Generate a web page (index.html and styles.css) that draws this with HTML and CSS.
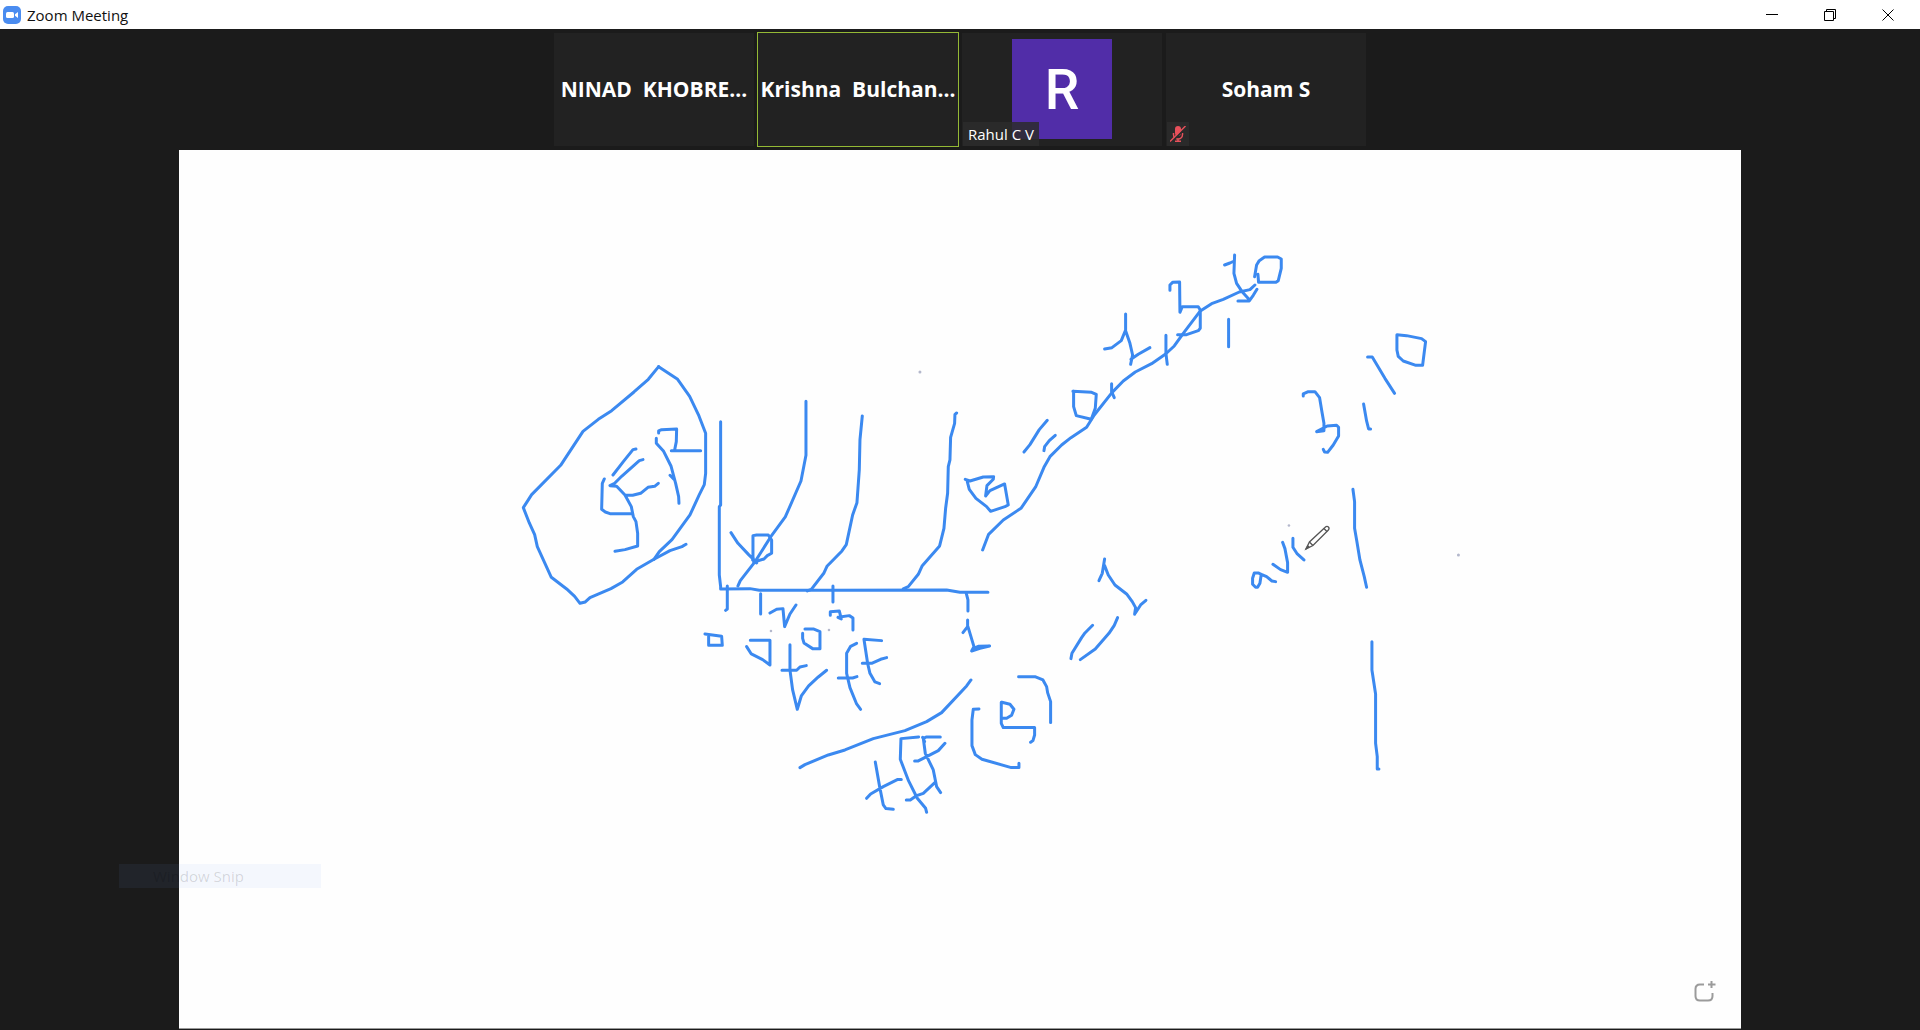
FILE: index.html
```html
<!DOCTYPE html>
<html lang="en">
<head>
<meta charset="utf-8">
<meta name="viewport" content="width=device-width, initial-scale=1">
<title>Zoom Meeting</title>
<link rel="stylesheet" href="styles.css">
</head>
<body>
<header class="titlebar">
  <svg class="app-icon" viewBox="0 0 18 18" aria-hidden="true">
    <rect width="18" height="18" rx="5" fill="#4a8cf0"/>
    <rect x="3" y="6" width="8" height="6" rx="1.5" fill="#fff"/>
    <path d="M12 8.2 15 6v6l-3-2.200z" fill="#fff"/>
  </svg>
  <h1 class="app-title">Zoom Meeting</h1>
  <div class="window-controls">
    <button class="window-button" type="button" aria-label="Minimize">
      <svg viewBox="0 0 12 12"><path d="M0 5.500h12"/></svg>
    </button>
    <button class="window-button" type="button" aria-label="Restore">
      <svg viewBox="0 0 12 12"><path d="M.5 2.500h9v9h-9zM2.500 2.500v-2h9v9h-2"/></svg>
    </button>
    <button class="window-button" type="button" aria-label="Close">
      <svg viewBox="0 0 12 12"><path d="M.5.5l11 11M11.500.5l-11 11"/></svg>
    </button>
  </div>
</header>

<main class="meeting">
  <ul class="participants">
    <li class="tile"><span class="tile-name">NINAD  KHOBRE...</span></li>
    <li class="tile tile-speaking"><span class="tile-name">Krishna  Bulchan...</span></li>
    <li class="tile">
      <span class="avatar" aria-hidden="true">R</span>
      <span class="tile-label">Rahul C V</span>
    </li>
    <li class="tile">
      <span class="tile-name">Soham S</span>
      <span class="tile-muted">
        <svg viewBox="0 0 16 16" role="img" aria-label="Muted">
          <rect x="5" y="0" width="6" height="10" rx="3" fill="#e8505b"/>
          <path d="M3.500 7v1.500a4.500 4.500 0 0 0 9 0V7M8 13v2M5 15.200h6" fill="none" stroke="#e8505b" stroke-width="1.500"/>
          <path d="M1.500 16 16.500 1" stroke="#2b2b2b" stroke-width="2"/>
          <path d="M0 15.500 15.500 0" stroke="#e8505b" stroke-width="1.400"/>
        </svg>
      </span>
    </li>
  </ul>

  <section class="board" aria-label="Shared whiteboard">
    <svg class="drawing" viewBox="179 150 1562 878" role="img" aria-label="Handwritten notes">
      <!-- loop round the first note -->
      <g class="ink" transform="translate(510 350) scale(.33333)">
        <path d="M446 50 415 88 372 126 305 182 265 208 219 244 152 346 65 434 40 473 58 519 74 554 82 590 124 682 170 717 194 739 210 760 226 756 240 743 303 716 338 696 380 658 432 628 480 602 516 590 528 583"/>
        <path d="M446 50 503 88 539 139 567 198 587 250V370L583 404 567 436 540 495 486 569 448 605 432 628"/>
        <path d="M446 249V243L455 239 500 237 499 275 494 300M484 302H572M439 265V280L461 304 483 348 497 400 506 440 507 460M480 376 494 390"/>
        <path d="M378 297 369 299 340 335 309 375M399 329 388 332 335 379 314 400 300 407 320 409 345 435 364 470 370 500 378 515 383 550V588L345 599 315 604M283 387 277 400 275 478 286 486 300 491H368M347 436H368L392 430 414 412 434 409 445 400"/>
      </g>
      <!-- axes, curves and tick labels -->
      <g class="ink" transform="translate(690 390) scale(.33333)">
        <path d="M92 95V345L88 350V555L92 590V597L180 596 208 601H430L770 600 810 607H894"/>
        <path d="M348 34V196L333 273 286 381 242 441 196 514 151 572 144 588"/>
        <path d="M517 78 510 150 508 240 501 338 488 375 469 464 456 483 411 529 402 549 364 598 352 603"/>
        <path d="M800 69 795 73 794 100 782 142 780 210 775 230 773 310 767 355 762 415 749 468 697 527 685 553 655 590 640 597"/>
        <path d="M123 428 144 460 176 494 196 514M192 518 189 500V437L200 435H235L245 450V490L232 497 222 507 192 516M188 510 200 519"/>
        <path d="M112 588V657L107 661M212 611V672M429 588V636M829 610 834 630V663"/>
        <path d="M45 732 95 739 97 766H56V737M181 751H240V825L218 809 184 792 170 770M240 669 260 658 279 656 284 710 300 672 318 645"/>
        <path d="M345 717H370L390 725V776H368L342 759 338 745V730M421 676V665L448 663 454 687 444 682 478 677 489 684V720"/>
        <path d="M300 764V840L308 900 322 958 334 918 356 888 385 861 410 841M276 841H320L330 831 349 827M500 760 482 769 470 790V850L480 893 500 942 512 958M445 864H488L501 860M575 752 522 748 533 820 540 850 555 876 569 881M517 820H545L572 808 590 803"/>
        <path d="M833 690V710L819 728M834 710 852 770 845 783 870 775 899 768 865 769 850 776"/>
        <path d="M826 268 840 273 880 261 911 260 910 268 891 287 887 318 900 302 944 282 955 345 945 350 902 364 890 350 858 325 838 298 832 275"/>
      </g>
      <!-- lower notes -->
      <g class="ink" transform="translate(780 640) scale(.33333)">
        <path d="M573 120 560 138 485 218 440 245 375 272 280 296 195 330 145 345 75 374 60 383"/>
        <path d="M286 366 299 440 310 495 318 506 340 508M260 475 272 462 310 440 352 419H364M416 291 363 296 361 358 386 423 412 475 437 505 440 517M379 480H391L408 468 430 460 467 426M481 291H440L430 295 436 340 460 390 470 440 482 458M428 292 434 305M404 363H415L440 350 475 332 495 310"/>
        <path d="M597 207 580 208 576 240V317L586 344 606 358 694 383H717V370"/>
        <path d="M664 187V250L670 263H764V285L759 302 752 307M666 187 690 193 702 208 695 226 680 235H666"/>
        <path d="M716 110H765L789 120 800 140 803 158 812 185V248"/>
      </g>
      <!-- list along the slope -->
      <g class="ink" transform="translate(950 240) scale(.33333)">
        <path d="M98 930 116 883 160 840 213 805 257 741 282 682 300 650 335 615 363 593 410 562 433 525 486 458 520 423 556 396 605 371 647 342 673 318 700 280 750 214 785 191 820 178 868 156 900 149 915 135"/>
        <path d="M222 636 240 614 268 569 292 541M282 632 284 620 298 602 316 586M369 454 425 457 439 463 436 505 424 538 379 527 371 500V454M485 431V455L493 473"/>
        <path d="M464 327 486 323 514 302 527 270V222M527 272 540 310 548 345 542 373M543 358 565 343 600 323M648 286V340L652 373"/>
        <path d="M660 151V135L668 127 689 126 690 217 697 200H745L751 210V265L745 272 710 284H683M836 238V320"/>
        <path d="M824 75 840 69 853 63M854 45 852 100 860 130 878 157 897 178M864 183H898L910 166 921 148"/>
        <path d="M914 110 920 75 928 62 944 51H983L994 57V85L985 122 978 127H926L924 103"/>
      </g>
      <!-- middle notes and separators -->
      <g class="ink" transform="translate(1040 470) scale(.33333)">
        <path d="M177 332 187 310 194 267M194 287 205 315 225 345 260 372 277 395 287 413 284 433M286 430 302 405 318 391M93 566 96 550 125 503 135 489 158 466M121 569 166 537 207 490 223 466 233 443"/>
        <path d="M664 313 655 309H643L638 325V343L647 352H653L660 340 664 313 680 320 696 333 707 335M699 283 722 299 743 307V278L735 236 728 217M759 205V232L772 252 792 270"/>
        <path d="M939 58 944 95V175L951 215 960 270 973 320 980 352M996 515V600L1007 672V820L1012 860V897H1017"/>
      </g>
      <!-- right-hand numbers -->
      <g class="ink" transform="translate(1220 310) scale(.33333)">
        <path d="M250 258V252L265 245H285L299 263 306 305 312 340V362L290 365 322 348 350 346 356 352V378L340 405 323 427 314 426 310 418M431 282 440 333 446 357H452M443 141H457L495 205 524 250M531 74 560 77 605 86 617 95 608 166H588L550 153 535 139 531 120Z"/>
      </g>
      <g class="speck">
        <circle cx="771" cy="631" r="1.300"/>
        <circle cx="829" cy="630" r="1.300"/>
        <circle cx="1289" cy="525.500" r="1.300"/>
        <circle cx="1458.500" cy="555" r="1.500"/>
        <circle cx="920" cy="372" r="1.500"/>
      </g>
      <g class="pencil" transform="translate(1306 526)">
        <path d="M0 23 3.500 16 19 1.500Q21-.5 22.500 1T22 4.500L7 19.500Z"/>
        <path d="M3.500 16 7 19.500M18 2.500l3 3M0 23l2-3 1 1z"/>
      </g>
    </svg>
    <button class="add-frame" type="button" aria-label="Add page">
      <svg viewBox="0 0 22 22"><path d="M10 4.500H6Q1.500 4.500 1.500 9v7q0 4.500 4.500 4.500h8q4.500 0 4.500-4.500v-3M17.500 1v7M14 4.500h7.500"/></svg>
    </button>
  </section>
  <div class="snip-hint">Window Snip</div>
</main>
</body>
</html>
```
FILE: styles.css
```css
* {
  box-sizing: border-box;
}

body {
  display: flex;
  flex-direction: column;
  min-height: 100vh;
  margin: 0;
  background: #1b1b1b;
  font-family: "Open Sans", "Noto Sans", sans-serif;
}

button {
  padding: 0;
  border: 0;
  background: none;
}

.titlebar {
  display: flex;
  align-items: center;
  height: 29px;
  padding: 0 3px;
  background: #fff;
}

.app-icon {
  width: 18px;
  height: 18px;
}

.app-title {
  flex: 1;
  margin: 0 0 0 6px;
  color: #111;
  font-size: 15px;
  font-weight: 400;
  line-height: 20px;
}

.window-controls {
  display: flex;
}

.window-button {
  display: grid;
  place-items: center;
  width: 58px;
  height: 28px;
}

.window-button svg {
  width: 12px;
  height: 12px;
  fill: none;
  stroke: #000;
}

.meeting {
  position: relative;
  display: flex;
  flex: 1;
  flex-direction: column;
  align-items: center;
}

.participants {
  display: flex;
  gap: 4px;
  margin: 0;
  padding: 4px;
  list-style: none;
}

.tile {
  position: relative;
  display: grid;
  place-items: center;
  width: 200px;
  height: 113px;
  background: #222;
}

.tile-speaking {
  outline: 1px solid #94b935;
}

.tile-name {
  padding-bottom: 2px;
  color: #fff;
  font-size: 21px;
  font-weight: 700;
  line-height: 28px;
  white-space: pre;
}

.avatar {
  display: grid;
  place-items: center;
  width: 100px;
  height: 100px;
  margin-bottom: 1px;
  padding-top: 2px;
  background: #512da8;
  color: #fff;
  font: 500 55px/64px Roboto, sans-serif;
}

.tile-label,
.tile-muted {
  position: absolute;
  bottom: 0;
  left: 1px;
  height: 24px;
  background: rgba(44, 44, 44, .85);
}

.tile-label {
  padding: 0 5px;
  color: #fff;
  font-size: 15px;
  line-height: 24px;
  white-space: nowrap;
}

.tile-muted {
  display: grid;
  place-items: center;
  width: 22px;
}

.tile-muted svg {
  width: 16px;
  height: 16px;
}

.board {
  position: relative;
  width: 81.35%;
  aspect-ratio: 1562 / 878;
  border-bottom: 1px solid #999;
  background: #fefefe;
}

.drawing {
  display: block;
  width: 100%;
  height: 100%;
}

.ink {
  fill: none;
  stroke: #3b89f0;
  stroke-width: 9;
  stroke-linecap: round;
  stroke-linejoin: round;
}

.speck {
  fill: #b4b8cc;
}

.pencil {
  fill: #fff;
  stroke: #555;
  stroke-width: 1.3;
}

.add-frame {
  position: absolute;
  right: 25px;
  bottom: 26px;
  width: 22px;
  height: 22px;
}

.add-frame svg {
  display: block;
  fill: none;
  stroke: #9b9b9b;
  stroke-width: 2;
}

.snip-hint {
  position: absolute;
  bottom: 142px;
  left: 119px;
  width: 202px;
  padding-left: 34px;
  background: rgba(120, 160, 240, .07);
  color: rgba(0, 0, 0, .14);
  font-size: 15px;
  line-height: 24px;
}
```
